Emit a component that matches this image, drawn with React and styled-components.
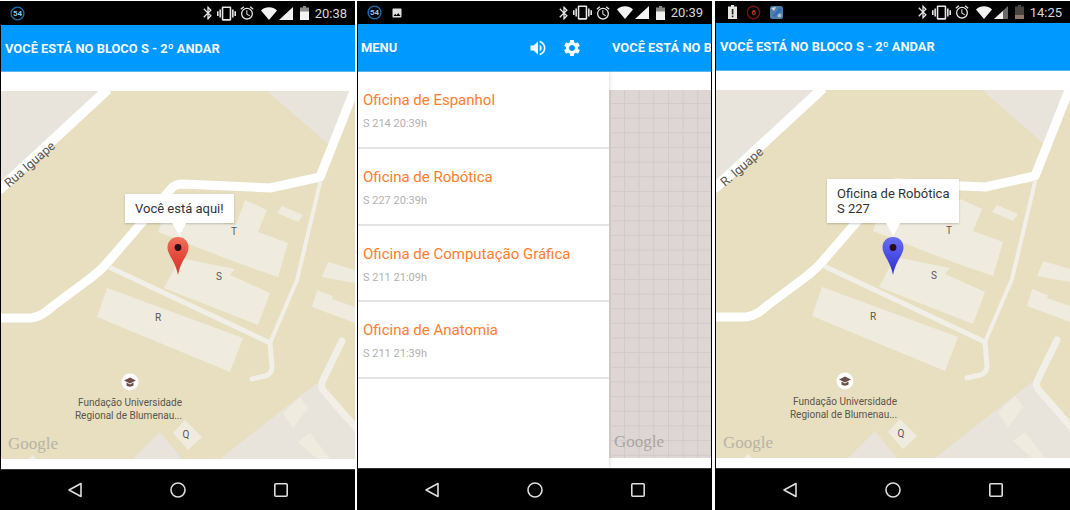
import styled, { createGlobalStyle } from "styled-components";
import {
  MdBluetooth,
  MdVibration,
  MdOutlineAlarm,
  MdVolumeUp,
  MdSettings,
  MdImage,
} from "react-icons/md";

const workshops = [
  { name: "Oficina de Espanhol", info: "S 214 20:39h" },
  { name: "Oficina de Robótica", info: "S 227 20:39h" },
  { name: "Oficina de Computação Gráfica", info: "S 211 21:09h" },
  { name: "Oficina de Anatomia", info: "S 211 21:39h" },
];

function CountBadge() {
  return (
    <svg width="15" height="15" viewBox="0 0 15 15">
      <circle cx="7.5" cy="7.5" r="6.4" fill="none" stroke="#1c6ea8" strokeWidth="1.4" />
      <text x="7.5" y="10.4" textAnchor="middle" fontSize="8" fontWeight="700" fontFamily="Roboto, sans-serif" fill="#8fc6ea">
        54
      </text>
    </svg>
  );
}

function AlertBadge() {
  return (
    <svg width="15" height="15" viewBox="0 0 15 15">
      <circle cx="7.5" cy="7.5" r="6.2" fill="none" stroke="#7a1414" strokeWidth="1.4" />
      <text x="7.5" y="10.4" textAnchor="middle" fontSize="8" fontWeight="700" fontFamily="Roboto, sans-serif" fill="#c43030">
        6
      </text>
    </svg>
  );
}

function AppBadge() {
  return (
    <svg width="15" height="15" viewBox="0 0 15 15">
      <rect x="1" y="1" width="13" height="13" rx="2.5" fill="#4f7fa8" />
      <path d="M3 11 L11 3 L13 5 L6 12 Z" fill="#2a6fc0" />
      <path d="M2 3 L7 2 L5 6 Z" fill="#c9d6e0" />
      <circle cx="10.5" cy="10.5" r="2" fill="#a8bccb" />
    </svg>
  );
}

function Wifi() {
  return (
    <svg width="16" height="13" viewBox="0 0 16 13">
      <path d="M0 3.4 C4.4 -0.8 11.6 -0.8 16 3.4 L8 13 Z" fill="#f2f2f2" />
    </svg>
  );
}

function Signal({ full }) {
  return (
    <svg width="14" height="13" viewBox="0 0 14 13">
      <path d="M14 0 V13 H0 Z" fill={full ? "#f2f2f2" : "#6a6a6a"} />
      {!full && <path d="M9 5 V13 H0 L0 13 Z" fill="#f2f2f2" />}
    </svg>
  );
}

function Battery({ low }) {
  return (
    <svg width="9" height="14" viewBox="0 0 9 14">
      <path d="M3 0 H6 V1.5 H9 V14 H0 V1.5 H3 Z" fill={low ? "#4a4440" : "#8a8a8a"} />
      {low ? <rect y="10" width="9" height="4" fill="#8a7a6c" /> : <rect y="5.5" width="9" height="8.5" fill="#f2f2f2" />}
    </svg>
  );
}

function WarningBattery() {
  return (
    <svg width="9" height="14" viewBox="0 0 9 14">
      <path d="M3 0 H6 V1.5 H9 V14 H0 V1.5 H3 Z" fill="#e4e4e0" />
      <rect x="3.8" y="4" width="1.6" height="5.5" fill="#222" />
      <rect x="3.8" y="10.6" width="1.6" height="1.6" fill="#222" />
    </svg>
  );
}

function StatusBar({ height, time, left, low, pad = 0, gap = 9 }) {
  return (
    <Status $height={height}>
      <StatusLeft $pad={pad} $gap={gap}>{left}</StatusLeft>
      <StatusRight>
        <MdBluetooth size={16} />
        <VibrateIcon size={19} />
        <MdOutlineAlarm size={16} />
        <SignalGroup>
          <Wifi />
          <Signal full={!low} />
        </SignalGroup>
        <Battery low={low} />
        <Clock>{time}</Clock>
      </StatusRight>
    </Status>
  );
}

function NavBar({ height }) {
  return (
    <Nav $height={height}>
      <svg width="16" height="16" viewBox="0 0 16 16">
        <path d="M14 1.5 V14.5 L2 8 Z" fill="none" stroke="#ddd" strokeWidth="1.6" strokeLinejoin="round" />
      </svg>
      <svg width="16" height="16" viewBox="0 0 16 16">
        <circle cx="8" cy="8" r="7" fill="none" stroke="#ddd" strokeWidth="1.6" />
      </svg>
      <svg width="16" height="16" viewBox="0 0 16 16">
        <rect x="1.8" y="1.8" width="12.4" height="12.4" rx="1" fill="none" stroke="#ddd" strokeWidth="1.6" />
      </svg>
    </Nav>
  );
}

function Pin({ left, top, id, light, main, dark }) {
  return (
    <PinBox $left={left} $top={top}>
      <svg width="22" height="38" viewBox="0 0 22 38">
        <defs>
          <linearGradient id={id} x1="0" y1="0" x2="0" y2="1">
            <stop offset="0" stopColor={light} />
            <stop offset="0.5" stopColor={main} />
            <stop offset="1" stopColor={dark} />
          </linearGradient>
        </defs>
        <path d="M11 0 C4.7 0 0.5 4.6 0.5 10.5 C0.5 18 8 23 11 38 C14 23 21.5 18 21.5 10.5 C21.5 4.6 17.3 0 11 0 Z" fill={`url(#${id})`} />
        <circle cx="11" cy="10.5" r="3.4" fill="#2a0d18" />
      </svg>
    </PinBox>
  );
}

// desenho do mapa, coordenadas locais (354 x 368)
function MapDrawing({ road, roadX, roadY }) {
  return (
    <svg width="354" height="368" viewBox="0 0 354 368" style={{ display: "block" }}>
      <rect width="354" height="368" fill="#e7dfbf" />
      <path d="M0 0 H105 L0 98 Z" fill="#e8e4dc" />
      <path d="M266 0 H354 L327 53 Z" fill="#e8e4dc" />
      <path d="M316 292 L219 368 H354 V334 Z" fill="#e8e4dc" />
      <path d="M159 341 L132 368 H181 Z" fill="#e8e4dc" />

      <g fill="#efecdf">
        <path d="M244 109 L266 119 L257 141 L287 152 L277 186 L234 171 L157 141 L163 125 L235 134 Z" />
        <path d="M179 167 L234 178 L229 184 L269 202 L257 234 L163 197 Z" />
        <path d="M106 197 L242 247 L229 281 L96 226 Z" />
        <path d="M281 115 L302 124 L297 131 L276 122 Z" />
        <path d="M327 171 L354 179 V192 L321 186 Z" />
        <path d="M316 199 L311 216 L354 232 V214 Z" />
        <path d="M334 198 L354 205 V216 L331 208 Z" fill="#e7dfbf" />
        <path d="M184 329 L201 346 L187 359 L172 342 Z" />
        <path d="M299 306 L307 317 L292 337 L282 322 Z" />
        <path d="M309 342 L329 368 H316 L297 351 Z" />
        <path d="M28 368 L32 364 L36 368 Z" />
      </g>

      <g fill="none" stroke="#fff" strokeLinejoin="round">
        <path d="M107 -2 L-2 99" strokeWidth="10" />
        <path d="M353 0 L319 86 L269 97 L181 93 C176 93 172 95 169 99 L106 172 C100 179 95 183 87 189 L52 215 C46 220 40 226 30 227 L-2 227" strokeWidth="9" />
      </g>
      <g fill="none" stroke="#f1efe8" strokeLinecap="round" strokeLinejoin="round">
        <path d="M319 92 L296 189 L269 252" strokeWidth="4" />
        <path d="M110 177 L267 251" strokeWidth="5" />
        <path d="M269 252 L271 276 C271 281 268 284 264 285 L251 288" strokeWidth="5" />
        <path d="M341 250 L322 289 C320 293 320 296 322 299 L356 338" strokeWidth="7" />
        <path d="M212 182 L206 203" strokeWidth="7" stroke="#efecdf" strokeLinecap="butt" />
      </g>

      <MapLabel x={roadX} y={roadY} fontSize="12.5" transform={`rotate(-41 ${roadX} ${roadY})`}>
        {road}
      </MapLabel>
      <MapLabel x="233" y="144" fontSize="10" textAnchor="middle">T</MapLabel>
      <MapLabel x="218" y="189" fontSize="10" textAnchor="middle">S</MapLabel>
      <MapLabel x="157" y="230" fontSize="10" textAnchor="middle">R</MapLabel>
      <MapLabel x="185" y="347" fontSize="10" textAnchor="middle">Q</MapLabel>

      <circle cx="129" cy="291" r="8.5" fill="#fff" />
      <path d="M129 286.5 L135 289.5 L129 292.5 L123 289.5 Z M125.5 291.6 L129 293.4 L132.5 291.6 V294.6 C131 296 127 296 125.5 294.6 Z" fill="#6d4f47" />
      <MapLabel x="129" y="315" fontSize="10" textAnchor="middle">Fundação Universidade</MapLabel>
      <MapLabel x="127.5" y="328" fontSize="10" textAnchor="middle">Regional de Blumenau...</MapLabel>
      <GoogleMark x="7" y="358">Google</GoogleMark>
    </svg>
  );
}

export default function App() {
  return (
    <>
      <GlobalStyle />
      <Page>
        <Phone $gap={2}>
          <StatusBar height={24} time="20:38" left={<CountBadge />} />
          <AppBar $height={47}>
            <BarTitle>VOCÊ ESTÁ NO BLOCO S - 2º ANDAR</BarTitle>
          </AppBar>
          <MapArea $top={19} $bottom={9}>
            <MapFrame>
              <MapDrawing road="Rua Iguape" roadX={8} roadY={97} />
              <Bubble $left={124} $top={103}>Você está aqui!</Bubble>
              <Pin left={166} top={146} id="pin-red" light="#f0705c" main="#e5493a" dark="#c93a30" />
            </MapFrame>
          </MapArea>
          <NavBar height={41} />
        </Phone>

        <Phone $gap={3} $closed>
          <StatusBar
            height={23}
            time="20:39"
            left={
              <>
                <CountBadge />
                <GalleryIcon><MdImage size={12} /></GalleryIcon>
              </>
            }
          />
          <AppBar $height={48}>
            <MenuSide>
              <BarTitle>MENU</BarTitle>
              <BarActions>
                <MdVolumeUp size={20} />
                <MdSettings size={20} />
              </BarActions>
            </MenuSide>
            <BarTitle>VOCÊ ESTÁ NO B</BarTitle>
          </AppBar>
          <DrawerBody>
            <Drawer>
              {workshops.map((item) => (
                <Row key={item.name}>
                  <RowTitle>{item.name}</RowTitle>
                  <RowInfo>{item.info}</RowInfo>
                </Row>
              ))}
            </Drawer>
            <DimmedSide>
              <DimmedMap>
                <DimmedGoogle>Google</DimmedGoogle>
              </DimmedMap>
            </DimmedSide>
          </DrawerBody>
          <NavBar height={42} />
        </Phone>

        <Phone>
          <StatusBar
            height={22}
            time="14:25"
            low
            pad={3}
            gap={8.5}
            left={
              <>
                <WarningBattery />
                <AlertBadge />
                <AppBadge />
              </>
            }
          />
          <AppBar $height={48}>
            <BarTitle>VOCÊ ESTÁ NO BLOCO S - 2º ANDAR</BarTitle>
          </AppBar>
          <MapArea $top={19} $bottom={10}>
            <MapFrame>
              <MapDrawing road="R. Iguape" roadX={9} roadY={97} />
              <Bubble $left={111} $top={89}>
                Oficina de Robótica
                <br />
                S 227
              </Bubble>
              <Pin left={166} top={147} id="pin-blue" light="#6a6ef0" main="#4a4de6" dark="#2f2fc4" />
            </MapFrame>
          </MapArea>
          <NavBar height={42} />
        </Phone>
      </Page>
    </>
  );
}

const GlobalStyle = createGlobalStyle`
  html, body {
    margin: 0;
    background: #fff;
  }
  * {
    box-sizing: border-box;
  }
`;

const Page = styled.div`
  display: flex;
  width: 1070px;
  height: 510px;
  padding-top: 1px;
  font-family: Roboto, "Liberation Sans", sans-serif;
  overflow: hidden;
`;

const Phone = styled.div`
  display: flex;
  flex-direction: column;
  flex-shrink: 0;
  width: 355px;
  height: 509px;
  margin-right: ${(props) => props.$gap || 0}px;
  border-left: 1px solid #000;
  border-right: ${(props) => (props.$closed ? "1px solid #000" : "none")};
`;

const Status = styled.div`
  display: flex;
  align-items: center;
  justify-content: space-between;
  height: ${(props) => props.$height}px;
  padding: 0 8px 0 9px;
  background: #000;
  color: #e6e6e6;
  flex-shrink: 0;
`;

const StatusLeft = styled.div`
  display: flex;
  align-items: center;
  gap: ${(props) => props.$gap}px;
  padding-left: ${(props) => props.$pad}px;
`;

const StatusRight = styled.div`
  display: flex;
  align-items: center;
  gap: 3px;
`;

const VibrateIcon = styled(MdVibration)`
  margin-left: -2px;
`;

const SignalGroup = styled.div`
  display: flex;
  align-items: center;
  gap: 2px;
  margin-left: 3px;
  margin-right: 3.5px;
`;

const Clock = styled.span`
  font-size: 13px;
  color: #d8d8d8;
  margin-left: 3px;
`;

const GalleryIcon = styled.span`
  display: flex;
  color: #e0e0e0;
`;

const AppBar = styled.div`
  display: flex;
  align-items: center;
  height: ${(props) => props.$height}px;
  padding-left: 4px;
  background: #0099ff;
  border-bottom: 1px solid #59b9f7;
  overflow: hidden;
  white-space: nowrap;
  flex-shrink: 0;
`;

const BarTitle = styled.span`
  font-size: 12.9px;
  font-weight: 700;
  color: #f4f8fb;
`;

const MenuSide = styled.div`
  display: flex;
  align-items: center;
  justify-content: space-between;
  width: 251px;
  padding-right: 30px;
  margin-left: -1px;
  flex-shrink: 0;
`;

const BarActions = styled.div`
  display: flex;
  align-items: center;
  gap: 14.5px;
  color: #f4f8fb;
`;

const MapArea = styled.div`
  flex: 1;
  padding-top: ${(props) => props.$top}px;
  padding-bottom: ${(props) => props.$bottom}px;
  background: #fff;
`;

const MapFrame = styled.div`
  position: relative;
  width: 354px;
  height: 368px;
  overflow: hidden;
`;

const MapLabel = styled.text`
  font-family: Roboto, sans-serif;
  fill: #5b564e;
`;

const GoogleMark = styled.text`
  font-family: "Liberation Serif", serif;
  font-size: 17px;
  fill: #b8b3a8;
`;

const Bubble = styled.div`
  position: absolute;
  left: ${(props) => props.$left}px;
  top: ${(props) => props.$top}px;
  padding: 7px 10px;
  background: #fff;
  box-shadow: 0 1px 2px rgba(0, 0, 0, 0.2);
  font-size: 13px;
  line-height: 15px;
  color: #333;
  white-space: nowrap;

  &::after {
    content: "";
    position: absolute;
    left: 50%;
    top: 100%;
    width: 14px;
    height: 13px;
    margin-left: -7px;
    background: #fff;
    clip-path: polygon(0 0, 100% 0, 50% 100%);
  }
`;

const PinBox = styled.div`
  position: absolute;
  left: ${(props) => props.$left}px;
  top: ${(props) => props.$top}px;
  display: flex;
`;

const DrawerBody = styled.div`
  display: flex;
  flex: 1;
  min-height: 0;
  background: #fff;
`;

const Drawer = styled.div`
  position: relative;
  width: 251px;
  flex-shrink: 0;
  background: #fff;
  box-shadow: 1px 0 3px rgba(0, 0, 0, 0.12);
`;

const Row = styled.div`
  display: flex;
  flex-direction: column;
  height: 76.75px;
  padding: 19px 0 0 5px;
  border-bottom: 2px solid #e4e4e4;
`;

const RowTitle = styled.span`
  font-size: 15px;
  line-height: 18px;
  color: #ff7d2e;
`;

const RowInfo = styled.span`
  margin-top: 8px;
  font-size: 11px;
  line-height: 14px;
  color: #b2b2b2;
`;

const DimmedSide = styled.div`
  flex: 1;
  padding: 18px 0 10px;
  background: #fff;
`;

const DimmedMap = styled.div`
  position: relative;
  height: 100%;
  background-color: #ded6d4;
  background-image:
    linear-gradient(to right, #d2cac8 1px, transparent 1px),
    linear-gradient(to bottom, #d2cac8 1px, transparent 1px);
  background-size: 14.67px 14.67px;
  background-position: 13px 13px;
  border-left: 2px solid #cfc7c4;
`;

const DimmedGoogle = styled.span`
  position: absolute;
  left: 3px;
  bottom: 6px;
  font-family: "Liberation Serif", serif;
  font-size: 17px;
  color: #aaa5a3;
`;

const Nav = styled.div`
  display: flex;
  flex-shrink: 0;
  height: ${(props) => props.$height}px;
  align-items: center;
  justify-content: center;
  gap: 87px;
  background: #000;
  border-top: 1px solid #333;
`;
